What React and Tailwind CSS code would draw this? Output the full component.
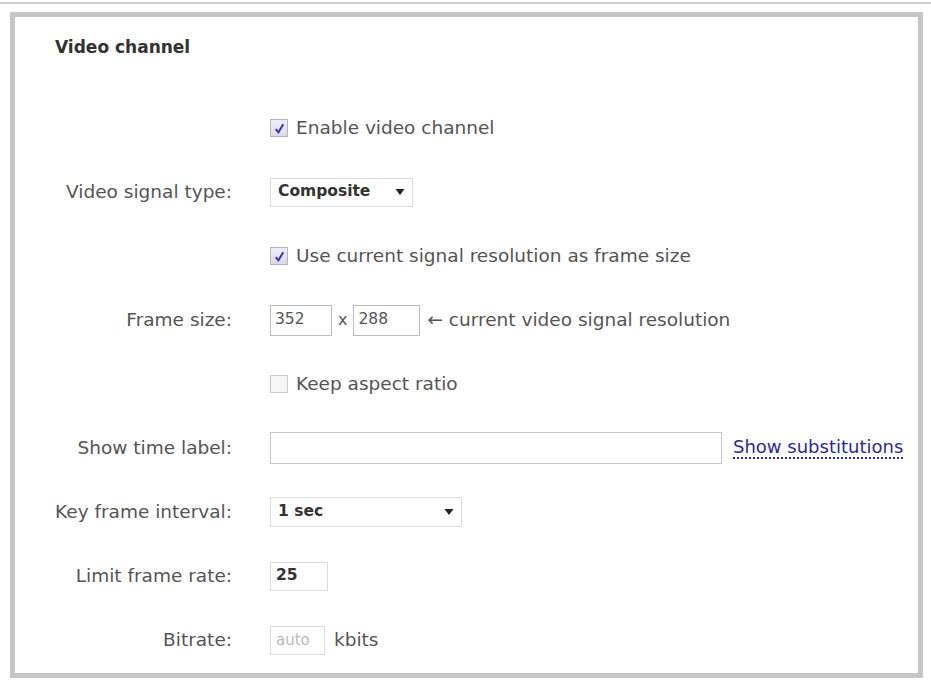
export default function App() {
  const font = { fontFamily: '"DejaVu Sans", Verdana, sans-serif' };
  const Row = ({ label, children }) => (
    <div className="flex items-center h-[64px]">
      <div className="w-[217px] text-right text-[#555] text-[18.5px] whitespace-nowrap">{label}</div>
      <div className="ml-[38px] flex items-center whitespace-nowrap">{children}</div>
    </div>
  );
  const Check = ({ checked }) => (
    <span className="w-[18px] h-[18px] border border-[#b5b5c5] bg-gradient-to-b from-[#eef] to-[#d8dbe8] flex items-center justify-center mr-[8px]">
      {checked && (
        <svg width="13" height="13" viewBox="0 0 12 12"><path d="M2.5 6.5 L5 9.5 L9.5 2" stroke="#2a3aa8" strokeWidth="1.8" fill="none" /></svg>
      )}
    </span>
  );
  const Arrow = () => (
    <svg width="10" height="6" viewBox="0 0 9 6"><path d="M0 0 H9 L4.5 6Z" fill="#222" /></svg>
  );
  const t = "text-[18.5px] text-[#555]";
  return (
    <div className="w-[931px] h-[681px] bg-white relative overflow-hidden" style={font}>
      <div className="h-[2px] mt-[2px] bg-[#d0d0d0]" />
      <div className="absolute left-[10px] top-[12px] w-[913px] h-[666px] border-[5px] border-[#c6c6c6] bg-white">
        <div className="h-[79px] pl-[40px] pt-[18px] text-[17px] font-bold text-[#333]">Video channel</div>
        <Row label="">
          <Check checked /><span className={t}>Enable video channel</span>
        </Row>
        <Row label="Video signal type:">
          <div className="w-[143px] h-[29px] border border-[#ddd] flex items-center justify-between px-[7px] text-[15.5px] font-bold text-[#333]">
            Composite <Arrow />
          </div>
        </Row>
        <Row label="">
          <Check checked /><span className={t}>Use current signal resolution as frame size</span>
        </Row>
        <Row label="Frame size:">
          <div className="w-[62px] h-[31px] border border-[#bbb] text-[15.5px] text-[#555] px-[4px] flex items-center">352</div>
          <span className="mx-[6px] text-[16px] text-[#555]">x</span>
          <div className="w-[67px] h-[31px] border border-[#bbb] text-[15.5px] text-[#555] px-[4px] flex items-center">288</div>
          <span className={"ml-[7px] " + t}>← current video signal resolution</span>
        </Row>
        <Row label="">
          <span className="w-[18px] h-[18px] border border-[#ccc] bg-[#f6f6f6] mr-[8px]" />
          <span className={t}>Keep aspect ratio</span>
        </Row>
        <Row label="Show time label:">
          <div className="w-[452px] h-[32px] border border-[#c8c8c8]" />
          <span className="ml-[11px] text-[18px] text-[#2a2a9a] border-b-2 border-dotted border-[#2a2a9a] leading-[20px]">Show substitutions</span>
        </Row>
        <Row label="Key frame interval:">
          <div className="w-[192px] h-[30px] border border-[#ddd] flex items-center justify-between px-[7px] text-[15.5px] font-bold text-[#333]">
            1 sec <Arrow />
          </div>
        </Row>
        <Row label="Limit frame rate:">
          <div className="w-[58px] h-[29px] border border-[#ddd] flex items-center px-[5px] text-[15.5px] font-bold text-[#333]">25</div>
        </Row>
        <Row label="Bitrate:">
          <div className="w-[55px] h-[29px] border border-[#ddd] flex items-center px-[5px] text-[15px] text-[#bbb]">auto</div>
          <span className={"ml-[9px] " + t}>kbits</span>
        </Row>
      </div>
    </div>
  );
}
